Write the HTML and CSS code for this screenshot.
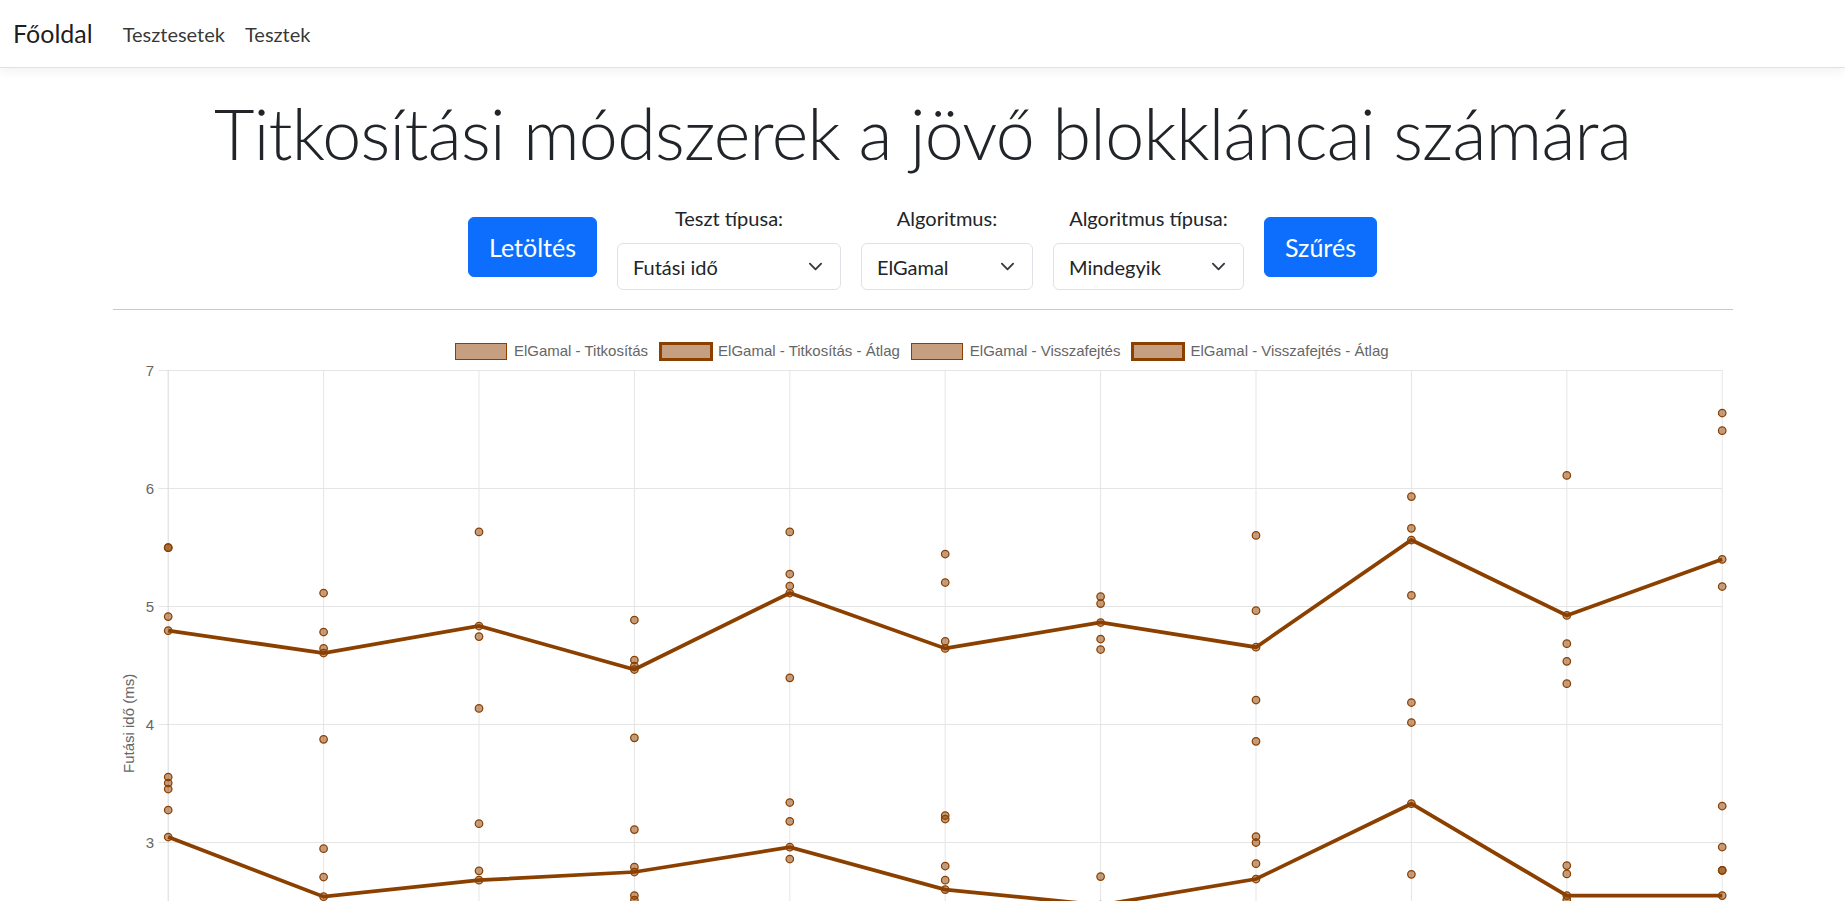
FILE: index.html
```html
<!DOCTYPE html>
<html lang="hu">
<head>
<meta charset="utf-8">
<title>Titkosítási módszerek</title>
<link rel="stylesheet" href="styles.css">
</head>
<body>
<nav class="navbar">
  <a class="brand" href="#">Főoldal</a>
  <a class="nav-link" href="#">Tesztesetek</a>
  <a class="nav-link" href="#">Tesztek</a>
</nav>
<main class="container">
  <h1 class="title">Titkosítási módszerek a jövő blokkláncai számára</h1>
  <div class="controls">
    <button class="btn">Letöltés</button>
    <div class="field">
      <label class="field-label">Teszt típusa:</label>
      <div class="select select-type"><span>Futási idő</span><svg class="chev" viewBox="0 0 16 16"><path d="M2 5l6 6 6-6"/></svg></div>
    </div>
    <div class="field">
      <label class="field-label">Algoritmus:</label>
      <div class="select select-alg"><span>ElGamal</span><svg class="chev" viewBox="0 0 16 16"><path d="M2 5l6 6 6-6"/></svg></div>
    </div>
    <div class="field">
      <label class="field-label">Algoritmus típusa:</label>
      <div class="select select-algtype"><span>Mindegyik</span><svg class="chev" viewBox="0 0 16 16"><path d="M2 5l6 6 6-6"/></svg></div>
    </div>
    <button class="btn">Szűrés</button>
  </div>
  <hr class="divider">
  <div class="chart">
    <div class="legend">
      <div class="legend-item"><span class="legend-box"></span><span>ElGamal - Titkosítás</span></div>
      <div class="legend-item"><span class="legend-box avg"></span><span>ElGamal - Titkosítás - Átlag</span></div>
      <div class="legend-item"><span class="legend-box"></span><span>ElGamal - Visszafejtés</span></div>
      <div class="legend-item"><span class="legend-box avg"></span><span>ElGamal - Visszafejtés - Átlag</span></div>
    </div>
    <svg class="plot" width="1620" height="560" viewBox="0 0 1620 560">
      <g class="grid">
        <line x1="45.5" x2="1609.2" y1="10.5" y2="10.5"/>
        <line x1="45.5" x2="1609.2" y1="128.5" y2="128.5"/>
        <line x1="45.5" x2="1609.2" y1="246.5" y2="246.5"/>
        <line x1="45.5" x2="1609.2" y1="364.5" y2="364.5"/>
        <line x1="45.5" x2="1609.2" y1="482.5" y2="482.5"/>
        <line x1="210.6" x2="210.6" y1="10" y2="560"/>
        <line x1="366" x2="366" y1="10" y2="560"/>
        <line x1="521.4" x2="521.4" y1="10" y2="560"/>
        <line x1="676.8" x2="676.8" y1="10" y2="560"/>
        <line x1="832.2" x2="832.2" y1="10" y2="560"/>
        <line x1="987.6" x2="987.6" y1="10" y2="560"/>
        <line x1="1143" x2="1143" y1="10" y2="560"/>
        <line x1="1298.4" x2="1298.4" y1="10" y2="560"/>
        <line x1="1453.8" x2="1453.8" y1="10" y2="560"/>
        <line x1="1609.2" x2="1609.2" y1="10" y2="560"/>
      </g>
      <line class="axis" x1="55.2" x2="55.2" y1="10" y2="560"/>
      <g class="ticks">
        <text x="41" y="10">7</text>
        <text x="41" y="128">6</text>
        <text x="41" y="246">5</text>
        <text x="41" y="364">4</text>
        <text x="41" y="482">3</text>
      </g>
      <text class="axis-title" transform="translate(20.5 413) rotate(-90)">Futási idő (ms)</text>
      <polyline class="avg-line" points="55.2,270.7 210.6,293 366,266 521.4,309.5 676.8,233 832.2,288.4 987.6,262.5 1143,287.2 1298.4,180 1453.8,255.4 1609.2,199.3"/>
      <polyline class="avg-line" points="55.2,477 210.6,536.7 366,520.2 521.4,512 676.8,487.2 832.2,529.6 987.6,545 1143,519 1298.4,443.7 1453.8,535.6 1609.2,535.6"/>
      <g class="pts">
        <circle cx="55.2" cy="187.7" r="3.75"/><circle cx="55.2" cy="187.7" r="3.75"/><circle cx="55.2" cy="256.6" r="3.75"/><circle cx="55.2" cy="270.7" r="3.75"/><circle cx="55.2" cy="417" r="3.75"/><circle cx="55.2" cy="423" r="3.75"/><circle cx="55.2" cy="429" r="3.75"/><circle cx="55.2" cy="450" r="3.75"/><circle cx="55.2" cy="477" r="3.75"/>
        <circle cx="210.6" cy="233" r="3.75"/><circle cx="210.6" cy="272" r="3.75"/><circle cx="210.6" cy="288.4" r="3.75"/><circle cx="210.6" cy="293" r="3.75"/><circle cx="210.6" cy="379.3" r="3.75"/><circle cx="210.6" cy="488.7" r="3.75"/><circle cx="210.6" cy="517" r="3.75"/><circle cx="210.6" cy="536.7" r="3.75"/>
        <circle cx="366" cy="171.9" r="3.75"/><circle cx="366" cy="266" r="3.75"/><circle cx="366" cy="276.6" r="3.75"/><circle cx="366" cy="348.4" r="3.75"/><circle cx="366" cy="463.7" r="3.75"/><circle cx="366" cy="510.8" r="3.75"/><circle cx="366" cy="520.2" r="3.75"/>
        <circle cx="521.4" cy="260" r="3.75"/><circle cx="521.4" cy="300" r="3.75"/><circle cx="521.4" cy="306" r="3.75"/><circle cx="521.4" cy="309.5" r="3.75"/><circle cx="521.4" cy="377.8" r="3.75"/><circle cx="521.4" cy="469.6" r="3.75"/><circle cx="521.4" cy="507.2" r="3.75"/><circle cx="521.4" cy="512" r="3.75"/><circle cx="521.4" cy="535.5" r="3.75"/><circle cx="521.4" cy="540" r="3.75"/>
        <circle cx="676.8" cy="171.9" r="3.75"/><circle cx="676.8" cy="214" r="3.75"/><circle cx="676.8" cy="226" r="3.75"/><circle cx="676.8" cy="233" r="3.75"/><circle cx="676.8" cy="317.8" r="3.75"/><circle cx="676.8" cy="442.5" r="3.75"/><circle cx="676.8" cy="461.3" r="3.75"/><circle cx="676.8" cy="487.2" r="3.75"/><circle cx="676.8" cy="499" r="3.75"/>
        <circle cx="832.2" cy="194" r="3.75"/><circle cx="832.2" cy="222.5" r="3.75"/><circle cx="832.2" cy="281.3" r="3.75"/><circle cx="832.2" cy="288.4" r="3.75"/><circle cx="832.2" cy="455.5" r="3.75"/><circle cx="832.2" cy="459" r="3.75"/><circle cx="832.2" cy="506" r="3.75"/><circle cx="832.2" cy="520.2" r="3.75"/><circle cx="832.2" cy="529.6" r="3.75"/>
        <circle cx="987.6" cy="236.6" r="3.75"/><circle cx="987.6" cy="243.6" r="3.75"/><circle cx="987.6" cy="262.5" r="3.75"/><circle cx="987.6" cy="279" r="3.75"/><circle cx="987.6" cy="289.5" r="3.75"/><circle cx="987.6" cy="516.6" r="3.75"/><circle cx="987.6" cy="545" r="3.75"/>
        <circle cx="1143" cy="175.4" r="3.75"/><circle cx="1143" cy="250.7" r="3.75"/><circle cx="1143" cy="287.2" r="3.75"/><circle cx="1143" cy="340" r="3.75"/><circle cx="1143" cy="381.3" r="3.75"/><circle cx="1143" cy="476.6" r="3.75"/><circle cx="1143" cy="482.5" r="3.75"/><circle cx="1143" cy="503.7" r="3.75"/><circle cx="1143" cy="519" r="3.75"/>
        <circle cx="1298.4" cy="136.6" r="3.75"/><circle cx="1298.4" cy="168.3" r="3.75"/><circle cx="1298.4" cy="180" r="3.75"/><circle cx="1298.4" cy="235.4" r="3.75"/><circle cx="1298.4" cy="342.5" r="3.75"/><circle cx="1298.4" cy="362.5" r="3.75"/><circle cx="1298.4" cy="443.7" r="3.75"/><circle cx="1298.4" cy="514.3" r="3.75"/>
        <circle cx="1453.8" cy="115.4" r="3.75"/><circle cx="1453.8" cy="255.4" r="3.75"/><circle cx="1453.8" cy="283.7" r="3.75"/><circle cx="1453.8" cy="301.3" r="3.75"/><circle cx="1453.8" cy="323.7" r="3.75"/><circle cx="1453.8" cy="505.6" r="3.75"/><circle cx="1453.8" cy="513.9" r="3.75"/><circle cx="1453.8" cy="535.6" r="3.75"/><circle cx="1453.8" cy="539.8" r="3.75"/>
        <circle cx="1609.2" cy="53" r="3.75"/><circle cx="1609.2" cy="70.7" r="3.75"/><circle cx="1609.2" cy="199.3" r="3.75"/><circle cx="1609.2" cy="226.5" r="3.75"/><circle cx="1609.2" cy="446" r="3.75"/><circle cx="1609.2" cy="487" r="3.75"/><circle cx="1609.2" cy="510.3" r="3.75"/><circle cx="1609.2" cy="510.3" r="3.75"/><circle cx="1609.2" cy="535.6" r="3.75"/>
      </g>
    </svg>
  </div>
</main>
</body>
</html>
```
FILE: styles.css
```css
* { box-sizing: border-box; }
html, body { margin: 0; }
body {
  font-family: Lato, "Open Sans", sans-serif;
  font-size: 20px;
  line-height: 1.5;
  color: #212529;
  background: #fff;
}
.navbar {
  height: 68px;
  display: flex;
  align-items: center;
  padding: 0 15px 0 13px;
  border-bottom: 1px solid #dee2e6;
  box-shadow: 0 4px 10px rgba(0, 0, 0, 0.05);
}
.brand {
  font-size: 25px;
  color: rgba(0, 0, 0, 0.9);
  margin-right: 20px;
  text-decoration: none;
}
.nav-link {
  font-size: 20px;
  color: rgba(0, 0, 0, 0.8);
  padding: 0 10px;
  text-decoration: none;
}
.container {
  width: 1650px;
  margin: 0 auto;
  padding: 23px 15px 0;
}
.title {
  margin: 0;
  font-size: 70px;
  font-weight: 300;
  line-height: 84px;
  letter-spacing: -0.7px;
  text-align: center;
}
.controls {
  margin-top: 28px;
  display: flex;
  justify-content: center;
  align-items: center;
  gap: 20px;
}
.btn {
  height: 60px;
  padding: 0 20px;
  border: 1px solid #0d6efd;
  background: #0d6efd;
  color: #fff;
  font-family: inherit;
  font-size: 25px;
  border-radius: 6px;
}
.field {
  display: flex;
  flex-direction: column;
  align-items: center;
}
.field-label {
  line-height: 30px;
  margin-bottom: 10px;
}
.select {
  height: 47px;
  display: flex;
  align-items: center;
  justify-content: space-between;
  padding: 0 17px 0 15px;
  border: 1px solid #dee2e6;
  border-radius: 6px;
  background: #fff;
}
.select-type { width: 224px; }
.select-alg { width: 172px; }
.select-algtype { width: 191px; }
.chev {
  width: 15px;
  height: 15px;
  fill: none;
  stroke: #343a40;
  stroke-width: 2;
  stroke-linecap: round;
  stroke-linejoin: round;
}
.divider {
  margin: 19px 0 0;
  border: 0;
  border-top: 1px solid #c8c9ca;
}
.legend {
  height: 50px;
  padding-top: 33px;
  display: flex;
  justify-content: center;
  align-items: flex-start;
  gap: 12.5px;
  font-family: "Liberation Sans", Arial, sans-serif;
  font-size: 15px;
  color: #666;
}
.legend-item {
  height: 16px;
  display: flex;
  align-items: center;
  gap: 7.5px;
  line-height: 16px;
}
.legend-box {
  width: 50px;
  height: 15px;
  background: rgba(139, 64, 0, 0.5);
  outline: 1.25px solid #8b4000;
  outline-offset: -0.625px;
}
.legend-box.avg {
  outline-width: 3.75px;
  outline-offset: -1.875px;
}
.plot {
  display: block;
  overflow: visible;
}
.grid line {
  stroke: #e5e5e5;
  stroke-width: 1;
}
.axis {
  stroke: #d9d9d9;
  stroke-width: 1;
}
.ticks text {
  font-family: "Liberation Sans", Arial, sans-serif;
  font-size: 15px;
  fill: #666;
  text-anchor: end;
  dominant-baseline: central;
}
.axis-title {
  font-family: "Liberation Sans", Arial, sans-serif;
  font-size: 15px;
  fill: #666;
}
.avg-line {
  fill: none;
  stroke: #8b4000;
  stroke-width: 3.75;
}
.pts circle {
  fill: rgba(139, 64, 0, 0.5);
  stroke: #8b4000;
  stroke-width: 1.25;
}
```
